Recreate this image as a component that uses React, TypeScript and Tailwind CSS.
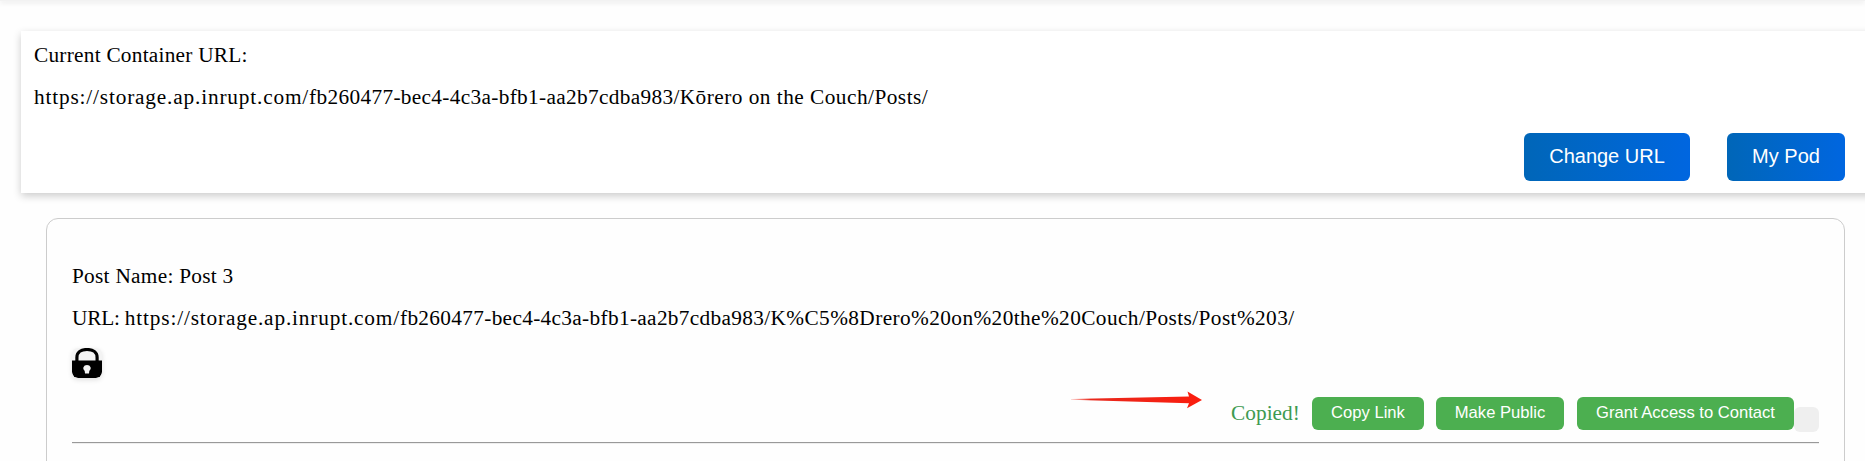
import React from "react";

const SERIF = "font-['Liberation_Serif',serif] text-[21.3px] leading-6 whitespace-nowrap text-black";
const BLUE =
  "h-12 rounded-md bg-linear-to-r from-[#0066b8] to-[#0066e0] font-['Liberation_Sans',sans-serif] text-[20px] leading-6 text-white whitespace-nowrap pb-[2px]";
const GREEN =
  "h-[33px] rounded-md bg-[#4caf50] font-['Liberation_Sans',sans-serif] text-[16.6px] leading-5 text-white whitespace-nowrap pb-[2px]";

function LockIcon() {
  return (
    <svg width="30" height="30" viewBox="0 0 30 30" className="block rounded-md bg-[#f3f3f3] shadow-[0_2px_5px_rgba(0,0,0,0.12)]">
      <path d="M4.900 14V9.500C4.900 4.500 9 1.500 15 1.500S25.100 4.500 25.100 9.500V14" fill="none" stroke="#000" strokeWidth="3.200" />
      <path d="M0 12.500H30V24a6 6 0 0 1-6 6H6a6 6 0 0 1-6-6Z" fill="#000" />
      <path d="M15 17a3.800 3.400 0 0 1 2.300 6.100L17 25.500H13L12.700 23.100A3.800 3.400 0 0 1 15 17Z" fill="#f3f3f3" />
    </svg>
  );
}

function Arrow() {
  return (
    <svg width="132" height="18" viewBox="0 0 132 18" className="block">
      <defs>
        <linearGradient id="tail" x1="0" x2="1" y1="0" y2="0">
          <stop offset="0" stopColor="#f5200f" stopOpacity="0.2" />
          <stop offset="0.15" stopColor="#e8281c" />
          <stop offset="1" stopColor="#fb1d0e" />
        </linearGradient>
      </defs>
      <path d="M0 7.900L118 5.400L116.500 .6L131 9L116 17.200L118 12.300L0 8.700Z" fill="url(#tail)" />
    </svg>
  );
}

function StoragePath({ children }: { children: React.ReactNode }) {
  return (
    <>
      <span className="tracking-[0.83px]">https://storage.ap.inrupt.com/</span>
      <span className="tracking-[0.33px]">fb260477-bec4-4c3a-bfb1-aa2b7cdba983/</span>
      {children}
    </>
  );
}

export default function App() {
  return (
    <div className="h-[461px] overflow-hidden bg-[#fefefe]">
      <div className="h-px bg-[#f2f2f2] shadow-[0_1px_5px_rgba(0,0,0,0.25)]" />
      <section className="mt-[30px] ml-[21px] h-[162px] w-[1860px] bg-white pt-3 pl-[13px] shadow-[0_3px_8px_rgba(0,0,0,0.2)]">
        <p className={`${SERIF} tracking-[0.25px]`}>Current Container URL:</p>
        <p className={`${SERIF} mt-[18px]`}>
          <StoragePath>
            <span className="tracking-[0.48px]">Kōrero on the Couch/Posts/</span>
          </StoragePath>
        </p>
        <div className="mt-6 flex w-[1811px] justify-end gap-[37px]">
          <button className={`${BLUE} w-[166px]`}>Change URL</button>
          <button className={`${BLUE} w-[118px]`}>My Pod</button>
        </div>
      </section>
      <section className="mt-[25px] ml-[46px] h-[300px] w-[1799px] rounded-xl border border-[#ccc] px-[25px] pt-[45px]">
        <p className={`${SERIF} tracking-[0.28px]`}>Post Name: Post 3</p>
        <p className={`${SERIF} mt-[18px]`}>
          <span className="tracking-[-0.2px]">URL: </span>
          <StoragePath>
            <span className="tracking-[0.41px]">K%C5%8Drero%20on%20the%20Couch/Posts/Post%203/</span>
          </StoragePath>
        </p>
        <div className="mt-[18px]">
          <LockIcon />
        </div>
        <div className="mt-[12px] flex h-[52px] items-start justify-end">
          <div className="mt-px mr-7">
            <Arrow />
          </div>
          <span className={`${SERIF} mt-[11px] mr-3 w-[69px] tracking-[0.05px] !text-[#3d9a50]`}>Copied!</span>
          <button className={`${GREEN} mt-[7px] w-[112px]`}>Copy Link</button>
          <button className={`${GREEN} mt-[7px] ml-3 w-[128px]`}>Make Public</button>
          <button className={`${GREEN} mt-[7px] ml-[13px] w-[217px]`}>Grant Access to Contact</button>
          <span className="mt-[17px] h-[25px] w-[25px] rounded-md bg-[#efefef]" />
        </div>
        <hr className="h-0.5 border-t border-b border-t-[#999] border-b-[#eee]" />
      </section>
    </div>
  );
}
